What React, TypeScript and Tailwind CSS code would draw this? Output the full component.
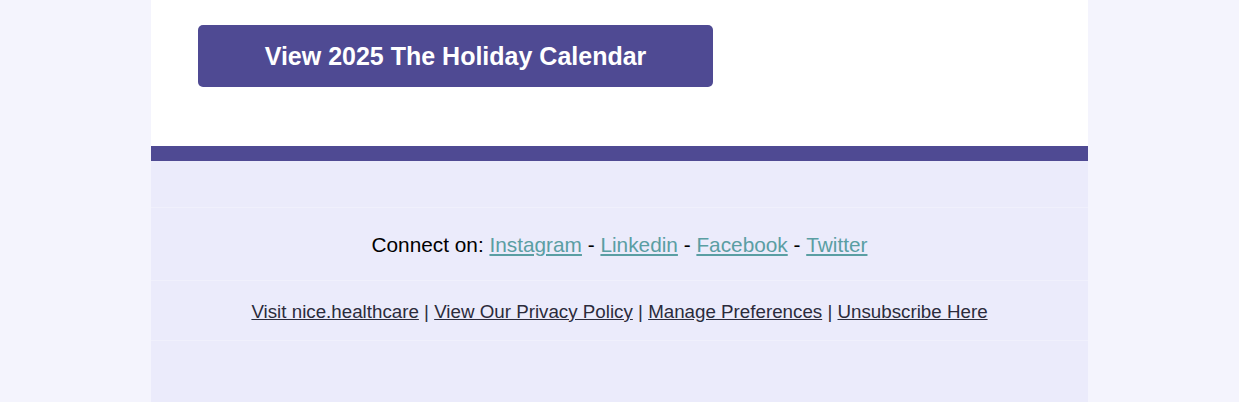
import React from 'react';

const social = ['Instagram', 'Linkedin', 'Facebook', 'Twitter'];
const footerLinks = ['Visit nice.healthcare', 'View Our Privacy Policy', 'Manage Preferences', 'Unsubscribe Here'];

export default function App() {
  return (
    <div className="min-h-[402px] bg-[#f4f4fd] font-['Liberation_Sans',Arial,sans-serif]">
      <div className="mx-auto w-[937px]">
        {/* white body */}
        <div className="bg-white pt-[25px] pb-[59px] pl-[47px]">
          <a
            href="#"
            className="flex h-[62px] w-[515px] items-center justify-center rounded-[5px] bg-[#4f4a93] pt-[1px] text-[25px] font-bold text-white"
          >
            View 2025 The Holiday Calendar
          </a>
        </div>
        <div className="h-[15px] bg-[#4f4a93]" />

        {/* footer */}
        <div className="bg-[#ebebfb]">
          <div className="h-[47px] border-b border-[#f0f0fc]" />
          <div className="flex h-[73px] items-center justify-center border-b border-[#f0f0fc] pt-[1px] text-[20.8px] text-black">
            <span>Connect on:&nbsp;</span>
            {social.map((s, i) => (
              <React.Fragment key={s}>
                <a href="#" className="text-[#5a9ea3] underline">
                  {s}
                </a>
                {i < social.length - 1 && <span>&nbsp;-&nbsp;</span>}
              </React.Fragment>
            ))}
          </div>
          <div className="flex h-[60px] items-center justify-center border-b border-[#f0f0fc] pt-[3px] text-[18.75px] text-[#2b2b3b]">
            {footerLinks.map((l, i) => (
              <React.Fragment key={l}>
                <a href="#" className="underline">
                  {l}
                </a>
                {i < footerLinks.length - 1 && <span>&nbsp;|&nbsp;</span>}
              </React.Fragment>
            ))}
          </div>
          <div className="h-[62px]" />
        </div>
      </div>
    </div>
  );
}
